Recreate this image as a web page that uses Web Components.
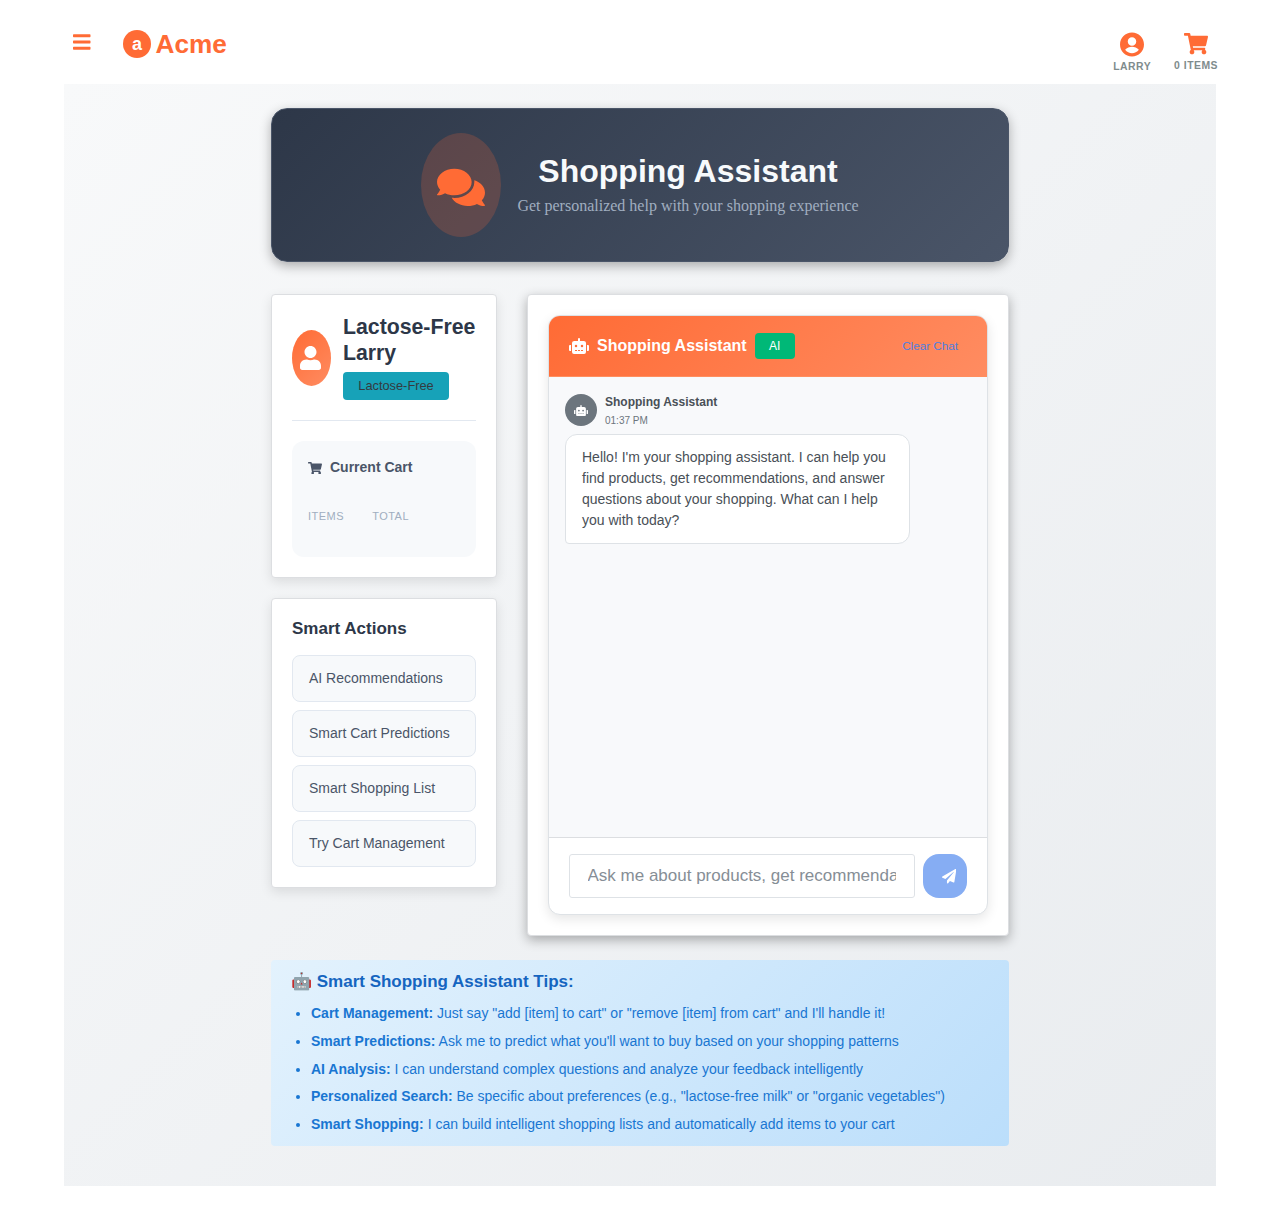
<!DOCTYPE html>
<html lang="en">
<head>
<meta charset="utf-8">
<title>Shopping Assistant</title>
<style>
html,body{margin:0;background:#fff}
body{font-family:"Liberation Sans",Arial,sans-serif;color:#2d3748}
</style>
</head>
<body>
<shop-page></shop-page>
<script>
const ICONS={
bars:[448,512,"M16 132h416c8.837 0 16-7.163 16-16V76c0-8.837-7.163-16-16-16H16C7.163 60 0 67.163 0 76v40c0 8.837 7.163 16 16 16zm0 160h416c8.837 0 16-7.163 16-16v-40c0-8.837-7.163-16-16-16H16c-8.837 0-16 7.163-16 16v40c0 8.837 7.163 16 16 16zm0 160h416c8.837 0 16-7.163 16-16v-40c0-8.837-7.163-16-16-16H16c-8.837 0-16 7.163-16 16v40c0 8.837 7.163 16 16 16z"],
comments:[576,512,"M416 192c0-88.4-93.1-160-208-160S0 103.6 0 192c0 34.3 14.1 65.9 38 92-13.4 30.2-35.5 54.2-35.8 54.5-2.2 2.3-2.8 5.7-1.5 8.7S4.8 352 8 352c36.6 0 66.9-12.3 88.7-25 32.2 15.7 70.3 25 111.3 25 114.9 0 208-71.6 208-160zm122 220c23.9-26 38-57.7 38-92 0-66.9-53.5-124.2-129.3-148.1.9 6.6 1.3 13.3 1.3 20.1 0 105.9-107.7 192-240 192-10.8 0-21.3-.8-31.7-1.9C207.8 439.6 281.8 480 368 480c41 0 79.1-9.2 111.3-25 21.8 12.7 52.1 25 88.7 25 3.2 0 6.1-1.9 7.3-4.8 1.3-2.9.7-6.3-1.5-8.7-.3-.3-22.4-24.2-35.8-54.5z"],
robot:[640,512,"M32,224H64V416H32A31.96,31.96,0,0,1,0,384V256A31.96,31.96,0,0,1,32,224Zm512-48V448a64.06,64.06,0,0,1-64,64H160a64.06,64.06,0,0,1-64-64V176a79.974,79.974,0,0,1,80-80H288V32a32,32,0,0,1,64,0V96H464A79.974,79.974,0,0,1,544,176ZM264,256a40,40,0,1,0-40,40A39.997,39.997,0,0,0,264,256Zm-8,128H192v32h64Zm96,0H288v32h64ZM456,256a40,40,0,1,0-40,40A39.997,39.997,0,0,0,456,256Zm-8,128H384v32h64ZM640,256V384a31.96,31.96,0,0,1-32,32H576V224h32A31.96,31.96,0,0,1,640,256Z"],
cart:[576,512,"M528.12 301.319l47.273-208C578.806 78.301 567.391 64 551.99 64H159.208l-9.166-44.81C147.758 8.021 137.93 0 126.529 0H24C10.745 0 0 10.745 0 24v16c0 13.255 10.745 24 24 24h69.883l70.248 343.435C147.325 417.1 136 435.222 136 456c0 30.928 25.072 56 56 56s56-25.072 56-56c0-15.674-6.447-29.835-16.824-40h209.647C430.447 426.165 424 440.326 424 456c0 30.928 25.072 56 56 56s56-25.072 56-56c0-22.172-12.888-41.332-31.579-50.405l5.517-24.276c3.413-15.018-8.002-29.319-23.403-29.319H218.117l-6.545-32h293.145c11.206 0 20.92-7.754 23.403-18.681z"],
user:[448,512,"M224 256c70.7 0 128-57.3 128-128S294.7 0 224 0 96 57.3 96 128s57.3 128 128 128zm89.6 32h-16.7c-22.2 10.2-46.9 16-72.9 16s-50.6-5.8-72.9-16h-16.7C60.2 288 0 348.2 0 422.4V464c0 26.5 21.5 48 48 48h352c26.5 0 48-21.5 48-48v-41.6c0-74.2-60.2-134.4-134.4-134.4z"],
account:[496,512,"M248 8C111 8 0 119 0 256s111 248 248 248 248-111 248-248S385 8 248 8zm0 98c48.6 0 88 39.4 88 88s-39.4 88-88 88-88-39.4-88-88 39.4-88 88-88zM106 368C140 324 198 306 248 306s108 18 142 62C356 414 300 438 248 438s-108-24-142-70z"],
plane:[512,512,"M476 3.2L12.5 270.6c-18.1 10.4-15.8 35.6 2.2 43.2L121 358.4l287.3-253.2c5.5-4.9 13.3 2.6 8.6 8.3L176 407v80.5c0 23.6 28.5 32.9 42.5 15.8L282 426l124.6 52.2c14.2 6 30.4-2.9 33-18.2l72-432C515 7.8 493.3-6.8 476 3.2z"]
};
const define=(name,html)=>customElements.define(name,class extends HTMLElement{
  constructor(){
    super();
    const t=document.createElement('template');
    t.innerHTML='<style>*{box-sizing:border-box}:host{display:block;box-sizing:border-box}</style>'+html;
    this.attachShadow({mode:'open'}).append(t.content.cloneNode(true));
  }
});
customElements.define('fa-icon',class extends HTMLElement{
  connectedCallback(){
    if(this.shadowRoot)return;
    const [w,h,d]=ICONS[this.getAttribute('name')],width=+this.getAttribute('width');
    this.attachShadow({mode:'open'}).innerHTML=`<style>:host{display:block;flex:none;width:${width}px;height:${width*h/w}px}svg{display:block;width:100%;height:100%}</style><svg viewBox="0 0 ${w} ${h}" fill="currentColor" fill-rule="evenodd" aria-hidden="true"><path d="${d}"/></svg>`;
  }
});
define('nav-link',`<style>
:host{display:flex;flex-direction:column;align-items:center;color:#ff6b35}
span{display:block;margin-top:var(--label-gap,4px);font:bold 10.4px/14px "Liberation Sans",sans-serif;letter-spacing:.5px;color:#7f8c8d;white-space:nowrap}
</style><slot name="icon"></slot><span><slot></slot></span>`);
define('app-header',`<style>
:host{display:flex;height:84px;padding:0 62px 0 73px;color:#ff6b35}
.menu{margin-top:32px}
.brand{display:flex;gap:4.5px;margin:30px auto 0 32.5px;height:28px;align-items:center;font-weight:bold;font-size:26.2px;line-height:28px}
.mark{width:28px;height:28px;border-radius:50%;background:#ff6b35;color:#fff;font-size:18px;line-height:28px;text-align:center}
.links{display:flex;gap:23px;align-items:flex-start}
.one{margin-top:32px;--label-gap:3px}.two{margin-top:33.4px;--label-gap:4.6px}
</style>
<fa-icon class="menu" name="bars" width="17.5"></fa-icon>
<div class="brand"><span class="mark">a</span><span>Acme</span></div>
<div class="links">
<nav-link class="one"><fa-icon slot="icon" name="account" width="24"></fa-icon>LARRY</nav-link>
<nav-link class="two"><fa-icon slot="icon" name="cart" width="24"></fa-icon>0 ITEMS</nav-link>
</div>`);
define('hero-banner',`<style>
:host{display:flex;justify-content:center;align-items:center;gap:16px;height:154px;border:1px solid #4a5568;border-radius:16px;background:linear-gradient(135deg,#2d3748 0%,#4a5568 100%);box-shadow:0 4px 12px rgba(0,0,0,.3)}
.bubble{width:80px;height:104px;border-radius:50%;background:rgba(255,107,53,.2);color:#ff6b35;padding:33.4px 16px}
.copy{text-align:center}
h1{margin:0 0 4px;font-size:32px;line-height:38px;color:#f7fafc}
p{margin:0;font:16px/24px "Liberation Serif",serif;color:#a0aec0}
</style><div class="bubble"><fa-icon name="comments" width="48"></fa-icon></div><div class="copy"><h1>Shopping Assistant</h1><p>Get personalized help with your shopping experience</p></div>`);
define('ui-card',`<style>:host{background:#fff;border:1px solid #dcdee1;border-radius:4px;padding:20px;box-shadow:var(--card-shadow,0 4px 12px rgba(0,0,0,.1))}</style><slot></slot>`);
define('user-profile',`<style>
:host{height:242px}
.who{display:flex;gap:12px;align-items:center;height:106px;padding-bottom:20px;border-bottom:1px solid #e2e8f0}
.avatar{width:39px;height:56px;flex:none;border-radius:50%;background:linear-gradient(135deg,#ff6b35,#ff8c61);color:#fff;display:flex;justify-content:center;align-items:center;padding-right:1.6px}
h2{margin:0 0 6px;font-size:21.28px;line-height:25.5px}
.badge{display:block;width:106px;height:28px;border-radius:4px;background:#17a2b8;color:#343a40;font-size:12.8px;line-height:28px;text-align:center}
.cart{margin-top:20px;height:116px;padding:15px 16px;border-radius:12px;background:#f7f9fb}
.title{display:flex;gap:8px;align-items:center;height:21px;font-size:14px;font-weight:bold;color:#4a5568}
.title fa-icon{margin-top:3px}
.stats{display:flex;gap:28px;margin-top:31px;font-size:11px;line-height:16px;letter-spacing:.5px;color:#a0aec0}
</style>
<div class="who"><div class="avatar"><fa-icon name="user" width="21"></fa-icon></div><div><h2>Lactose-Free Larry</h2><span class="badge">Lactose-Free</span></div></div>
<div class="cart"><div class="title"><fa-icon name="cart" width="14"></fa-icon><span>Current Cart</span></div><div class="stats"><span>ITEMS</span><span>TOTAL</span></div></div>`);
define('action-button',`<style>button{display:block;width:100%;height:47px;padding:0 16px 2px;border:1px solid #e2e8f0;border-radius:8px;background:#f7f9fb;font:14px/20px "Liberation Sans",sans-serif;color:#4a5568;text-align:left}</style><button><slot></slot></button>`);
define('smart-actions',`<style>:host{height:248px}h3{margin:0 0 16px;font-size:17px;line-height:20px}.list{display:flex;flex-direction:column;gap:8px}</style>
<h3>Smart Actions</h3><div class="list"><action-button>AI Recommendations</action-button><action-button>Smart Cart Predictions</action-button><action-button>Smart Shopping List</action-button><action-button>Try Cart Management</action-button></div>`);
define('chat-message',`<style>
.head{display:flex;gap:8px;height:41px}
.avatar{width:32px;height:32px;margin-top:1px;border-radius:50%;background:#6c757d;color:#fff;display:flex;align-items:center;justify-content:center;padding-top:.6px}
.name{font-weight:bold;font-size:12px;line-height:18px;color:#495057}
.time{font-size:10px;line-height:19px;color:#6c757d}
.bubble{width:85%;padding:12px 16px;border:1px solid #dee2e6;border-radius:12px 12px 12px 4px;background:#fff;font-size:14px;line-height:21px;color:#495057}
</style><div class="head"><div class="avatar"><fa-icon name="robot" width="14"></fa-icon></div><div><div class="name"><slot name="name"></slot></div><div class="time"><slot name="time"></slot></div></div></div><div class="bubble"><slot></slot></div>`);
define('chat-window',`<style>
:host{display:flex;flex-direction:column;height:600px;border:1px solid #dee2e6;border-radius:12px;overflow:hidden;background:#fff;box-shadow:0 4px 12px rgba(0,0,0,.1)}
header{display:flex;align-items:center;gap:8px;height:61px;flex:none;padding:0 20px;background:linear-gradient(135deg,#ff6b35,#ff8c61);border-bottom:1px solid #ff8e5f;color:#fff;font-size:16px;font-weight:bold}
.badge{width:40px;height:26px;border-radius:4px;background:#00b877;font-size:12px;font-weight:normal;line-height:26px;text-align:center}
.clear{margin-left:auto;padding:0 9px 2px 0;font-size:11.7px;font-weight:normal;color:#4f7fe0}
main{flex:1;padding:16px;background:#f8f9fb}
footer{display:flex;gap:8px;height:77px;flex:none;padding:16px 20px;border-top:1px solid #dcdee1}
input{flex:1;min-width:0;height:44px;padding:0 18px 0 17.5px;border:1px solid #dee2e6;border-radius:3px;background:#fff;font:17px "Liberation Sans",sans-serif}
input::placeholder{color:#868e96;opacity:1}
button{width:44px;height:44px;padding:.8px 0 0 8px;border:0;border-radius:16px;background:#86adf3;color:#fff;display:flex;align-items:center;justify-content:center}
</style>
<header><fa-icon name="robot" width="20"></fa-icon><span>Shopping Assistant</span><span class="badge">AI</span><span class="clear">Clear Chat</span></header>
<main><chat-message><span slot="name">Shopping Assistant</span><span slot="time">01:37 PM</span>Hello! I'm your shopping assistant. I can help you find products, get recommendations, and answer questions about your shopping. What can I help you with today?</chat-message></main>
<footer><input placeholder="Ask me about products, get recommendations..."><button aria-label="Send"><fa-icon name="plane" width="14.4"></fa-icon></button></footer>`);
define('tips-panel',`<style>
:host{height:186px;padding:12px 20px 0;border-radius:4px;background:linear-gradient(135deg,#e3f2fd,#bbdefb);color:#1976d2}
h3{margin:0 0 10px;font-size:17px;line-height:20px;height:20px;color:#1565c0}
ul{margin:0;padding-left:20px;font-size:14px;line-height:23.8px}
li{margin-bottom:4px}
</style><h3>🤖 Smart Shopping Assistant Tips:</h3><ul>
<li><b>Cart Management:</b> Just say "add [item] to cart" or "remove [item] from cart" and I'll handle it!</li>
<li><b>Smart Predictions:</b> Ask me to predict what you'll want to buy based on your shopping patterns</li>
<li><b>AI Analysis:</b> I can understand complex questions and analyze your feedback intelligently</li>
<li><b>Personalized Search:</b> Be specific about preferences (e.g., "lactose-free milk" or "organic vegetables")</li>
<li><b>Smart Shopping:</b> I can build intelligent shopping lists and automatically add items to your cart</li></ul>`);
define('shop-page',`<style>
:host{height:1218px}
.stage{margin:0 64px;height:1102px;padding:24px 207px 0;background:linear-gradient(135deg,#f8f9fa 0%,#e9ecef 100%)}
.columns{display:flex;gap:30px;align-items:flex-start;margin:32px 0 24px}
aside{width:226px;display:flex;flex-direction:column;gap:20px}
.chat{flex:1;--card-shadow:0 4px 12px rgba(0,0,0,.3)}
</style><app-header></app-header><div class="stage"><hero-banner></hero-banner>
<div class="columns"><aside><ui-card><user-profile></user-profile></ui-card><ui-card><smart-actions></smart-actions></ui-card></aside><ui-card class="chat"><chat-window></chat-window></ui-card></div>
<tips-panel></tips-panel></div>`);
</script>
</body>
</html>
